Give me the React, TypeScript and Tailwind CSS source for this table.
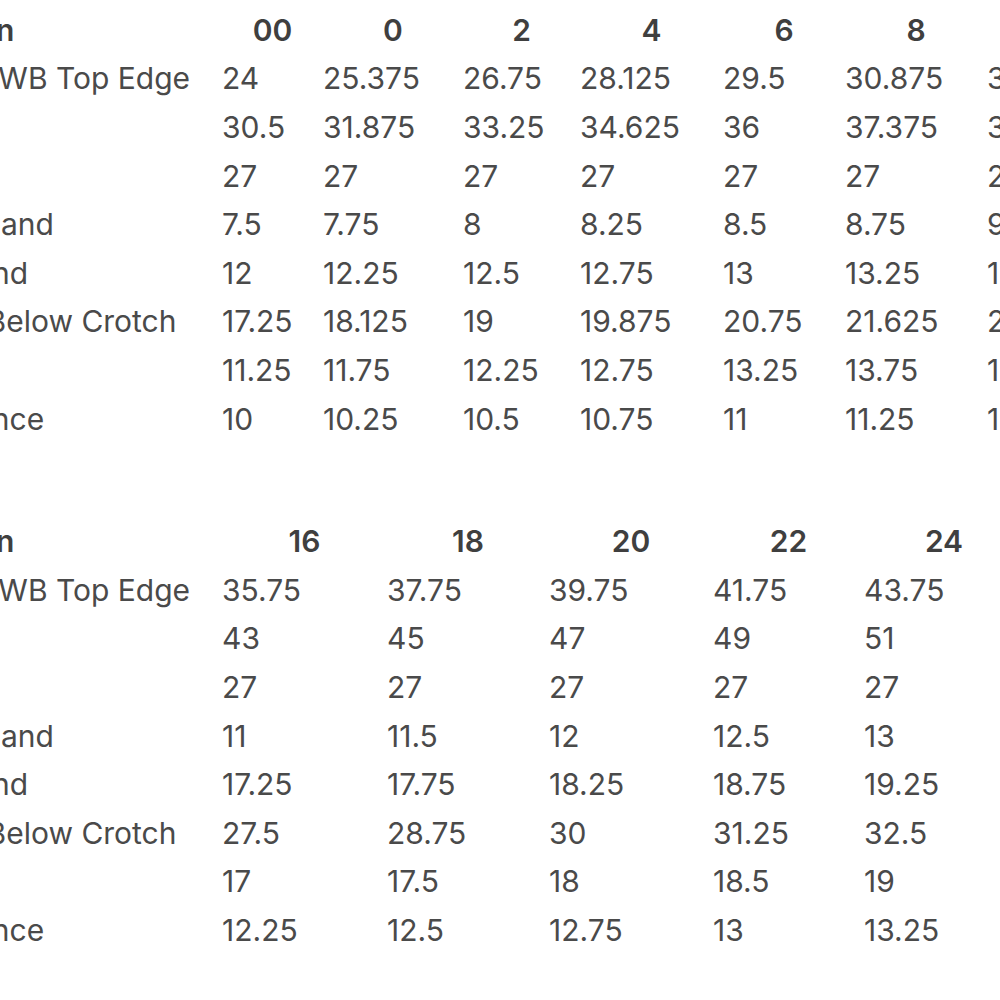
const font = { fontFamily: 'Inter, "Liberation Sans", sans-serif' };

const labels = [
  'Waist at WB Top Edge',
  'Hip',
  'Inseam',
  'Rise to Band',
  'Back Band',
  'Thigh 1 Below Crotch',
  'Knee',
  'Fit Distance',
];

const topSizes = ['00', '0', '2', '4', '6', '8', '10'];
const topRows = [
  ['24', '25.375', '26.75', '28.125', '29.5', '30.875', '32.25'],
  ['30.5', '31.875', '33.25', '34.625', '36', '37.375', '38.75'],
  ['27', '27', '27', '27', '27', '27', '27'],
  ['7.5', '7.75', '8', '8.25', '8.5', '8.75', '9'],
  ['12', '12.25', '12.5', '12.75', '13', '13.25', '13.5'],
  ['17.25', '18.125', '19', '19.875', '20.75', '21.625', '22.5'],
  ['11.25', '11.75', '12.25', '12.75', '13.25', '13.75', '14.25'],
  ['10', '10.25', '10.5', '10.75', '11', '11.25', '11.5'],
];

const bottomSizes = ['16', '18', '20', '22', '24'];
const bottomRows = [
  ['35.75', '37.75', '39.75', '41.75', '43.75'],
  ['43', '45', '47', '49', '51'],
  ['27', '27', '27', '27', '27'],
  ['11', '11.5', '12', '12.5', '13'],
  ['17.25', '17.75', '18.25', '18.75', '19.25'],
  ['27.5', '28.75', '30', '31.25', '32.5'],
  ['17', '17.5', '18', '18.5', '19'],
  ['12.25', '12.5', '12.75', '13', '13.25'],
];

function SizeTable({ sizes, rows, cols }: { sizes: string[]; rows: string[][]; cols: string }) {
  return (
    <div className={`grid ${cols} -ml-[123px] text-[30px] text-[#4a4a4a]`}>
      {/* header row */}
      <div className="h-[48.6px] flex items-center pl-[12px] font-semibold text-[#3f3f3f] whitespace-nowrap">
        Location
      </div>
      {sizes.map((s) => (
        <div key={s} className="h-[48.6px] flex items-center justify-center font-semibold text-[#3f3f3f]">
          {s}
        </div>
      ))}

      {rows.map((row, i) => (
        <div key={i} className="contents">
          <div className="h-[48.6px] flex items-center whitespace-nowrap">{labels[i]}</div>
          {row.map((v, j) => (
            <div key={j} className="h-[48.6px] flex items-center whitespace-nowrap">
              {v}
            </div>
          ))}
        </div>
      ))}
    </div>
  );
}

export default function App() {
  return (
    <div className="w-[1000px] h-[1000px] overflow-hidden bg-white pt-[6px]" style={font}>
      <SizeTable
        sizes={topSizes}
        rows={topRows}
        cols="grid-cols-[345px_101px_140px_117px_143px_122px_142px_160px]"
      />
      <div className="h-[74px]" />
      <SizeTable
        sizes={bottomSizes}
        rows={bottomRows}
        cols="grid-cols-[345px_165px_162px_164px_151px_160px]"
      />
    </div>
  );
}
